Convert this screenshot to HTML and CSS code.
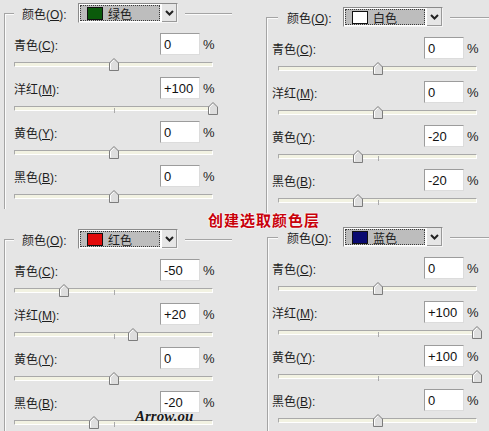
FILE: index.html
```html
<!DOCTYPE html>
<html lang="zh-CN">
<head>
    <meta charset="UTF-8">
    <meta name="viewport" content="width=device-width, initial-scale=1.0">
    <title>可选颜色</title>
    <link rel="stylesheet" href="styles.css">
</head>
<body>

<div class="sheet">

    <!-- 绿色 -->
    <fieldset class="panel panel-left">
        <legend class="panel-head">
            <span class="head-label">颜色(<u>O</u>):</span>
            <span class="picker">
                <span class="picker-field"><i class="swatch green"></i>绿色</span>
                <span class="picker-btn"><svg width="9" height="6" viewBox="0 0 9 6"><path d="M1 1 L4.5 4.5 L8 1" fill="none" stroke="#222" stroke-width="2"/></svg></span>
            </span>
        </legend>
        <div class="row"><span class="lbl">青色(<u>C</u>):</span><input class="num" value="0" readonly><span class="pct">%</span></div>
        <div class="slider"><div class="track"></div><svg class="thumb" style="left: 50%" width="10" height="13" viewBox="0 0 10 13"><path d="M0.5 5 L5 0.5 L9.5 5 V12.5 H0.5 Z" fill="#dedede" stroke="#7c7c7c"/><path d="M1.5 11.5 V5.4 L5 1.9" fill="none" stroke="#fff"/></svg></div>
        <div class="row"><span class="lbl">洋红(<u>M</u>):</span><input class="num" value="+100" readonly><span class="pct">%</span></div>
        <div class="slider"><div class="track"></div><svg class="thumb" style="left: 100%" width="10" height="13" viewBox="0 0 10 13"><path d="M0.5 5 L5 0.5 L9.5 5 V12.5 H0.5 Z" fill="#dedede" stroke="#7c7c7c"/><path d="M1.5 11.5 V5.4 L5 1.9" fill="none" stroke="#fff"/></svg></div>
        <div class="row"><span class="lbl">黄色(<u>Y</u>):</span><input class="num" value="0" readonly><span class="pct">%</span></div>
        <div class="slider"><div class="track"></div><svg class="thumb" style="left: 50%" width="10" height="13" viewBox="0 0 10 13"><path d="M0.5 5 L5 0.5 L9.5 5 V12.5 H0.5 Z" fill="#dedede" stroke="#7c7c7c"/><path d="M1.5 11.5 V5.4 L5 1.9" fill="none" stroke="#fff"/></svg></div>
        <div class="row"><span class="lbl">黑色(<u>B</u>):</span><input class="num" value="0" readonly><span class="pct">%</span></div>
        <div class="slider"><div class="track"></div><svg class="thumb" style="left: 50%" width="10" height="13" viewBox="0 0 10 13"><path d="M0.5 5 L5 0.5 L9.5 5 V12.5 H0.5 Z" fill="#dedede" stroke="#7c7c7c"/><path d="M1.5 11.5 V5.4 L5 1.9" fill="none" stroke="#fff"/></svg></div>
    </fieldset>

    <!-- 白色 -->
    <fieldset class="panel panel-right panel-white">
        <legend class="panel-head">
            <span class="head-label">颜色(<u>O</u>):</span>
            <span class="picker">
                <span class="picker-field"><i class="swatch white"></i>白色</span>
                <span class="picker-btn"><svg width="9" height="6" viewBox="0 0 9 6"><path d="M1 1 L4.5 4.5 L8 1" fill="none" stroke="#222" stroke-width="2"/></svg></span>
            </span>
        </legend>
        <div class="row"><span class="lbl">青色(<u>C</u>):</span><input class="num" value="0" readonly><span class="pct">%</span></div>
        <div class="slider"><div class="track"></div><svg class="thumb" style="left: 50%" width="10" height="13" viewBox="0 0 10 13"><path d="M0.5 5 L5 0.5 L9.5 5 V12.5 H0.5 Z" fill="#dedede" stroke="#7c7c7c"/><path d="M1.5 11.5 V5.4 L5 1.9" fill="none" stroke="#fff"/></svg></div>
        <div class="row"><span class="lbl">洋红(<u>M</u>):</span><input class="num" value="0" readonly><span class="pct">%</span></div>
        <div class="slider"><div class="track"></div><svg class="thumb" style="left: 50%" width="10" height="13" viewBox="0 0 10 13"><path d="M0.5 5 L5 0.5 L9.5 5 V12.5 H0.5 Z" fill="#dedede" stroke="#7c7c7c"/><path d="M1.5 11.5 V5.4 L5 1.9" fill="none" stroke="#fff"/></svg></div>
        <div class="row"><span class="lbl">黄色(<u>Y</u>):</span><input class="num" value="-20" readonly><span class="pct">%</span></div>
        <div class="slider"><div class="track"></div><svg class="thumb" style="left: 40%" width="10" height="13" viewBox="0 0 10 13"><path d="M0.5 5 L5 0.5 L9.5 5 V12.5 H0.5 Z" fill="#dedede" stroke="#7c7c7c"/><path d="M1.5 11.5 V5.4 L5 1.9" fill="none" stroke="#fff"/></svg></div>
        <div class="row"><span class="lbl">黑色(<u>B</u>):</span><input class="num" value="-20" readonly><span class="pct">%</span></div>
        <div class="slider"><div class="track"></div><svg class="thumb" style="left: 40%" width="10" height="13" viewBox="0 0 10 13"><path d="M0.5 5 L5 0.5 L9.5 5 V12.5 H0.5 Z" fill="#dedede" stroke="#7c7c7c"/><path d="M1.5 11.5 V5.4 L5 1.9" fill="none" stroke="#fff"/></svg></div>
    </fieldset>

    <!-- 红色 -->
    <fieldset class="panel panel-left panel-red">
        <legend class="panel-head">
            <span class="head-label">颜色(<u>O</u>):</span>
            <span class="picker">
                <span class="picker-field"><i class="swatch red"></i>红色</span>
                <span class="picker-btn"><svg width="9" height="6" viewBox="0 0 9 6"><path d="M1 1 L4.5 4.5 L8 1" fill="none" stroke="#222" stroke-width="2"/></svg></span>
            </span>
        </legend>
        <div class="row"><span class="lbl">青色(<u>C</u>):</span><input class="num" value="-50" readonly><span class="pct">%</span></div>
        <div class="slider"><div class="track"></div><svg class="thumb" style="left: 25%" width="10" height="13" viewBox="0 0 10 13"><path d="M0.5 5 L5 0.5 L9.5 5 V12.5 H0.5 Z" fill="#dedede" stroke="#7c7c7c"/><path d="M1.5 11.5 V5.4 L5 1.9" fill="none" stroke="#fff"/></svg></div>
        <div class="row"><span class="lbl">洋红(<u>M</u>):</span><input class="num" value="+20" readonly><span class="pct">%</span></div>
        <div class="slider"><div class="track"></div><svg class="thumb" style="left: 60%" width="10" height="13" viewBox="0 0 10 13"><path d="M0.5 5 L5 0.5 L9.5 5 V12.5 H0.5 Z" fill="#dedede" stroke="#7c7c7c"/><path d="M1.5 11.5 V5.4 L5 1.9" fill="none" stroke="#fff"/></svg></div>
        <div class="row"><span class="lbl">黄色(<u>Y</u>):</span><input class="num" value="0" readonly><span class="pct">%</span></div>
        <div class="slider"><div class="track"></div><svg class="thumb" style="left: 50%" width="10" height="13" viewBox="0 0 10 13"><path d="M0.5 5 L5 0.5 L9.5 5 V12.5 H0.5 Z" fill="#dedede" stroke="#7c7c7c"/><path d="M1.5 11.5 V5.4 L5 1.9" fill="none" stroke="#fff"/></svg></div>
        <div class="row"><span class="lbl">黑色(<u>B</u>):</span><input class="num" value="-20" readonly><span class="pct">%</span></div>
        <div class="slider"><div class="track"></div><svg class="thumb" style="left: 40%" width="10" height="13" viewBox="0 0 10 13"><path d="M0.5 5 L5 0.5 L9.5 5 V12.5 H0.5 Z" fill="#dedede" stroke="#7c7c7c"/><path d="M1.5 11.5 V5.4 L5 1.9" fill="none" stroke="#fff"/></svg></div>
    </fieldset>

    <!-- 蓝色 -->
    <fieldset class="panel panel-right panel-blue">
        <legend class="panel-head">
            <span class="head-label">颜色(<u>O</u>):</span>
            <span class="picker">
                <span class="picker-field"><i class="swatch blue"></i>蓝色</span>
                <span class="picker-btn"><svg width="9" height="6" viewBox="0 0 9 6"><path d="M1 1 L4.5 4.5 L8 1" fill="none" stroke="#222" stroke-width="2"/></svg></span>
            </span>
        </legend>
        <div class="row"><span class="lbl">青色(<u>C</u>):</span><input class="num" value="0" readonly><span class="pct">%</span></div>
        <div class="slider"><div class="track"></div><svg class="thumb" style="left: 50%" width="10" height="13" viewBox="0 0 10 13"><path d="M0.5 5 L5 0.5 L9.5 5 V12.5 H0.5 Z" fill="#dedede" stroke="#7c7c7c"/><path d="M1.5 11.5 V5.4 L5 1.9" fill="none" stroke="#fff"/></svg></div>
        <div class="row"><span class="lbl">洋红(<u>M</u>):</span><input class="num" value="+100" readonly><span class="pct">%</span></div>
        <div class="slider"><div class="track"></div><svg class="thumb" style="left: 100%" width="10" height="13" viewBox="0 0 10 13"><path d="M0.5 5 L5 0.5 L9.5 5 V12.5 H0.5 Z" fill="#dedede" stroke="#7c7c7c"/><path d="M1.5 11.5 V5.4 L5 1.9" fill="none" stroke="#fff"/></svg></div>
        <div class="row"><span class="lbl">黄色(<u>Y</u>):</span><input class="num" value="+100" readonly><span class="pct">%</span></div>
        <div class="slider"><div class="track"></div><svg class="thumb" style="left: 100%" width="10" height="13" viewBox="0 0 10 13"><path d="M0.5 5 L5 0.5 L9.5 5 V12.5 H0.5 Z" fill="#dedede" stroke="#7c7c7c"/><path d="M1.5 11.5 V5.4 L5 1.9" fill="none" stroke="#fff"/></svg></div>
        <div class="row"><span class="lbl">黑色(<u>B</u>):</span><input class="num" value="0" readonly><span class="pct">%</span></div>
        <div class="slider"><div class="track"></div><svg class="thumb" style="left: 50%" width="10" height="13" viewBox="0 0 10 13"><path d="M0.5 5 L5 0.5 L9.5 5 V12.5 H0.5 Z" fill="#dedede" stroke="#7c7c7c"/><path d="M1.5 11.5 V5.4 L5 1.9" fill="none" stroke="#fff"/></svg></div>
    </fieldset>

    <div class="title">创建选取颜色层</div>
    <div class="sign">Arrow.ou</div>
</div>

</body>
</html>
```

FILE: styles.css
```css
body {
    margin: 0;
    background-color: #e5e5e5;
    font-family: "Liberation Sans", "Noto Sans CJK SC", sans-serif;
    font-size: 12px;
    color: #1e1e1e;
}
.sheet {
    position: relative;
    width: 489px;
    height: 431px;
    overflow: hidden;
    box-sizing: border-box;
    padding: 3px 0 0 4px;
    display: grid;
    grid-template-columns: 228px 223px;
    column-gap: 34px;
    row-gap: 14px;
    align-items: start;
}
.panel {
    margin: 0;
    padding: 10px 0 0 9px;
    min-inline-size: 0;
    border: none;
    border-top: 1px solid #a4a4a4;
    border-left: 1px solid #a4a4a4;
    box-shadow: inset 1px 1px 0 #fbfbfb;
}
.panel-right {
    padding-left: 11px;
    margin-top: 4px;
}
.panel-red {
    margin-top: 2px;
}
.panel-blue {
    margin-top: 0;
    margin-left: 1px;
    padding-left: 10px;
}
.panel-right .lbl {
    margin-left: -6px;
}
.panel-head {
    display: flex;
    align-items: center;
    height: 20px;
    padding: 0 7px 0 8px;
    background-color: #e5e5e5;
}
.panel-right .panel-head {
    padding-left: 9px;
}
.head-label {
    width: 46px;
    margin-right: 10px;
    white-space: nowrap;
}
.picker {
    display: flex;
    width: 100px;
    height: 20px;
    box-sizing: border-box;
    border: 1px solid #8a8a8a;
    border-right-color: #f4f4f4;
    border-bottom-color: #f4f4f4;
    background-color: #fff;
}
.picker-field {
    flex-grow: 1;
    display: flex;
    align-items: center;
    margin: 1px;
    padding-left: 6px;
    background-color: #bdbdbd;
    border: 1px dotted #3a3a3a;
}
.swatch {
    width: 14px;
    height: 11px;
    margin-right: 5px;
    border: 1px solid #111;
}
.swatch.green { background-color: #0b5a0b; }
.swatch.white { background-color: #fff; }
.swatch.red { background-color: #e20a0a; }
.swatch.blue { background-color: #0a0a70; }
.picker-btn {
    width: 15px;
    display: flex;
    justify-content: center;
    align-items: center;
    background-color: #e6e6e6;
    border-left: 1px solid #fff;
    box-shadow: inset -1px -1px 0 #999;
}
.row {
    display: flex;
    align-items: center;
    width: 199px;
    height: 22px;
}
.lbl {
    flex-grow: 1;
    white-space: nowrap;
}
.num {
    width: 40px;
    height: 22px;
    box-sizing: border-box;
    margin: 0;
    padding: 0 0 0 3px;
    border: 1px solid #9c9c9c;
    border-right-color: #dcdcdc;
    border-bottom-color: #dcdcdc;
    background-color: #fff;
    font-family: "Liberation Sans", sans-serif;
    font-size: 13px;
    color: #111;
    outline: none;
}
.pct {
    width: 10px;
    margin-left: 3px;
    font-size: 13px;
}
.slider {
    position: relative;
    width: 199px;
    height: 22px;
}
.track {
    position: absolute;
    left: 0;
    right: 0;
    top: 7px;
    height: 3px;
    background-color: #f2f2e2;
    border-top: 1px solid #a9a9a9;
    border-left: 1px solid #a9a9a9;
    border-bottom: 1px solid #fff;
    border-right: 1px solid #fff;
}
.track::after {
    content: "";
    position: absolute;
    left: 50%;
    top: 1px;
    width: 1px;
    height: 5px;
    background-color: #aaa;
}
.thumb {
    position: absolute;
    top: 3px;
    margin-left: -5px;
}
.title {
    position: absolute;
    left: 208px;
    top: 209px;
    font-family: "Noto Sans CJK SC", sans-serif;
    font-size: 15px;
    font-weight: bold;
    letter-spacing: 1px;
    color: #c8000a;
    text-shadow: 0 0 2px #fff, 0 0 2px #fff;
}
.sign {
    position: absolute;
    left: 135px;
    top: 408px;
    font-family: "Liberation Serif", serif;
    font-style: italic;
    font-weight: bold;
    font-size: 15px;
    color: #1a1a1a;
    text-shadow: 0 0 1px #fff;
}
```
